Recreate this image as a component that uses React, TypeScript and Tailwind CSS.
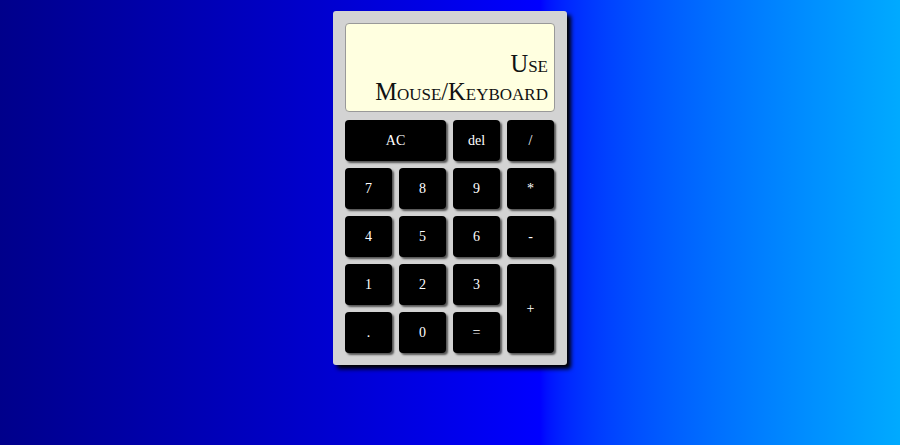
const keys: { label: string; span?: string }[] = [
  { label: 'AC', span: 'col-span-2' },
  { label: 'del' },
  { label: '/' },
  { label: '7' },
  { label: '8' },
  { label: '9' },
  { label: '*' },
  { label: '4' },
  { label: '5' },
  { label: '6' },
  { label: '-' },
  { label: '1' },
  { label: '2' },
  { label: '3' },
  { label: '+', span: 'row-span-2' },
  { label: '.' },
  { label: '0' },
  { label: '=' },
];

const App = () => {
  return (
    <div className="h-[445px] overflow-hidden bg-gradient-to-r from-[#00008b] via-[#0000ff] via-60% to-[#00aaff] font-['Liberation_Serif',serif]">
      <div className="pt-[11px] flex justify-center">
        {/* Calculator body */}
        <div className="w-[234px] bg-[#d3d3d3] rounded-[3px] p-[12px] shadow-[4px_4px_4px_#000]">
          {/* Display */}
          <div className="h-[89px] bg-[#ffffe0] border border-[#999] rounded-[4px] flex flex-col justify-end items-end px-[6px] pb-[5px] text-[24.5px] leading-[28px] text-[#111] [font-variant:small-caps]">
            <span>Use</span>
            <span>Mouse/Keyboard</span>
          </div>

          {/* Keys */}
          <div className="mt-[8px] grid grid-cols-[repeat(4,47px)] auto-rows-[41px] gap-[7px]">
            {keys.map((k) => (
              <button
                key={k.label}
                className={`${k.span ?? ''} bg-black text-white text-[14px] rounded-[4px] shadow-[2px_2px_2px_#555] flex items-center justify-center`}
              >
                {k.label}
              </button>
            ))}
          </div>
        </div>
      </div>
    </div>
  );
};

export default App;
